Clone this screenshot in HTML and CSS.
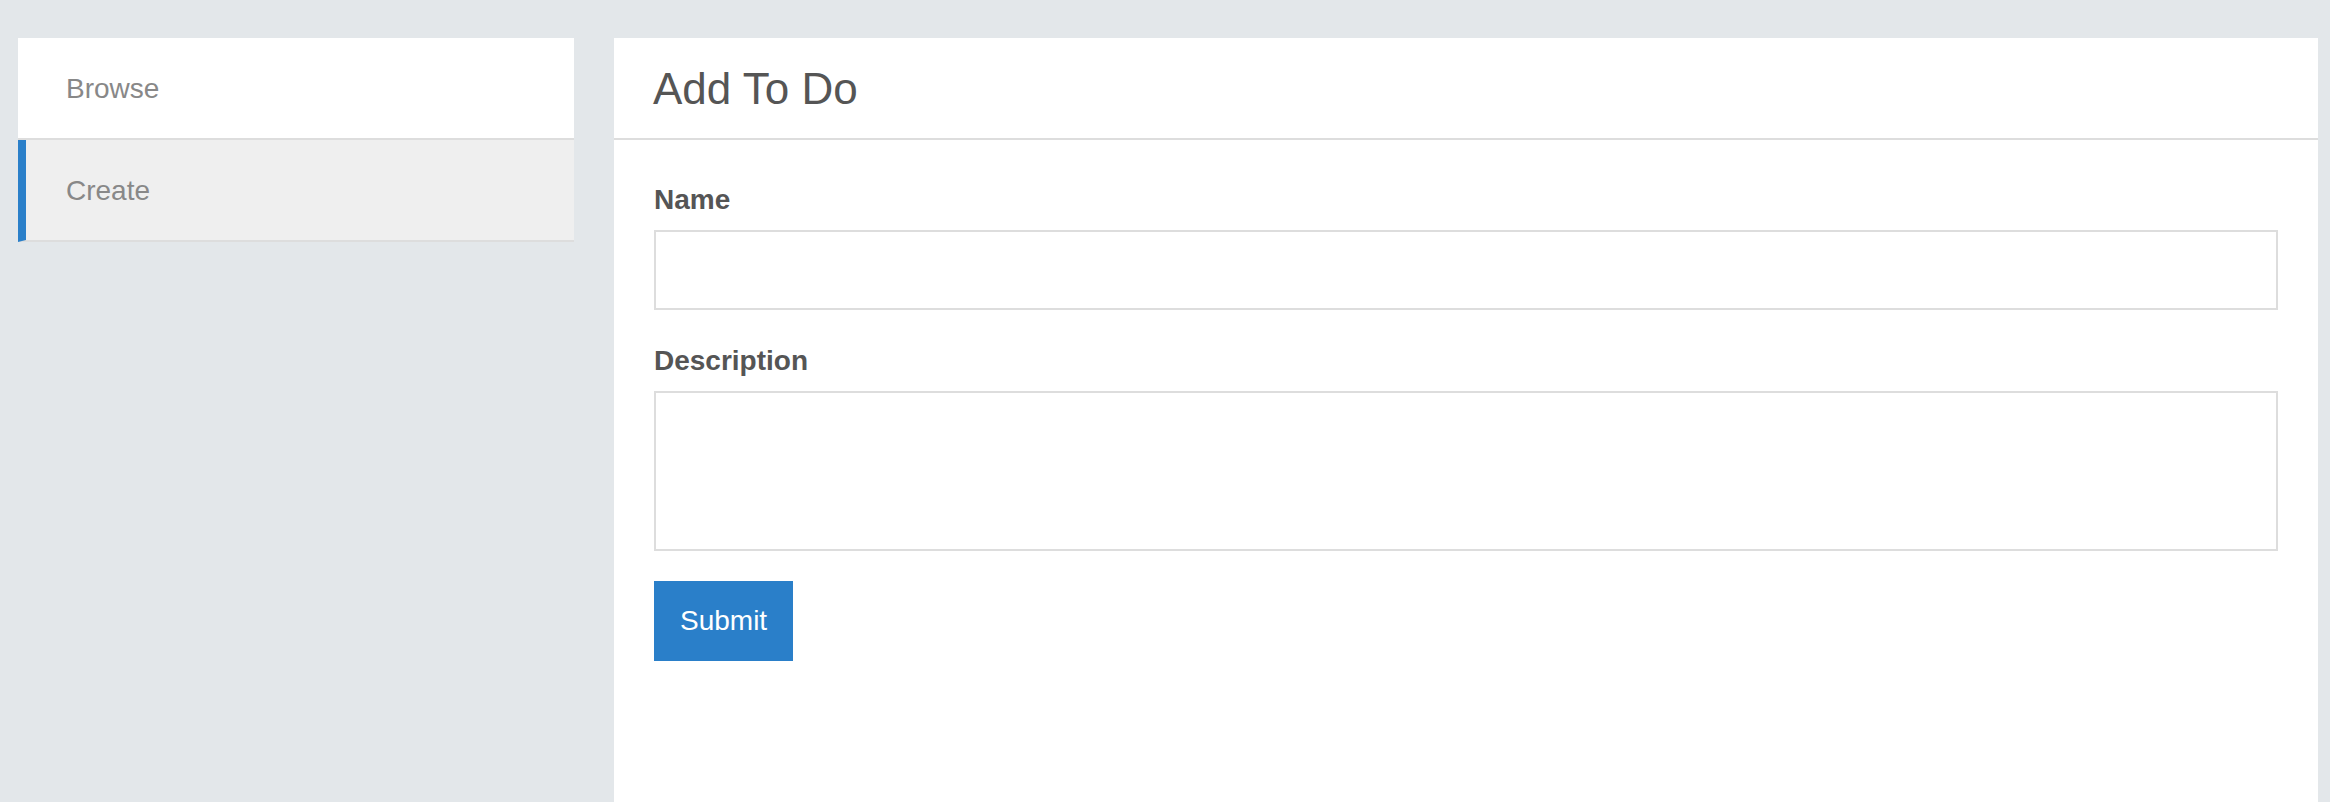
FILE: index.html
```html
<!DOCTYPE html>
<html lang="en">
<head>
<meta charset="utf-8">
<title>Add To Do</title>
<link rel="stylesheet" href="styles.css">
</head>
<body>
<div class="page">
  <nav class="sidebar">
    <a class="nav-item" href="#">Browse</a>
    <a class="nav-item active" href="#">Create</a>
  </nav>
  <main class="panel">
    <header class="panel-header">
      <h1 class="panel-title">Add To Do</h1>
    </header>
    <form class="panel-body">
      <div class="field">
        <label class="field-label" for="name">Name</label>
        <input class="field-input" id="name" type="text">
      </div>
      <div class="field">
        <label class="field-label" for="desc">Description</label>
        <textarea class="field-input field-textarea" id="desc"></textarea>
      </div>
      <button class="btn-submit" type="button">Submit</button>
    </form>
  </main>
</div>
</body>
</html>
```

FILE: styles.css
```css
html, body {
  margin: 0;
  padding: 0;
}

body {
  background: #e3e7ea;
  font-family: "Liberation Sans", Arial, Helvetica, sans-serif;
  color: #555;
}

.page {
  display: flex;
  align-items: flex-start;
  gap: 40px;
  padding: 38px 12px 0 18px;
  min-height: 100vh;
  box-sizing: border-box;
}

.sidebar {
  flex: 0 0 556px;
  display: flex;
  flex-direction: column;
}

.nav-item {
  display: flex;
  align-items: center;
  box-sizing: border-box;
  height: 102px;
  padding: 2px 0 0 48px;
  background: #fff;
  border-bottom: 2px solid #ddd;
  color: #888;
  font-size: 28px;
  text-decoration: none;
}

.nav-item.active {
  background: #efefef;
  border-left: 8px solid #2a7fc9;
  padding-left: 40px;
}

.panel {
  flex: 1;
  align-self: stretch;
  background: #fff;
  min-height: calc(100vh - 38px);
}

.panel-header {
  box-sizing: border-box;
  height: 102px;
  display: flex;
  align-items: center;
  padding: 2px 39px 0 39px;
  border-bottom: 2px solid #ddd;
}

.panel-title {
  margin: 0;
  font-size: 44px;
  font-weight: normal;
  color: #555;
}

.panel-body {
  padding: 39px 40px 40px 40px;
  margin: 0;
}

.field {
  margin-bottom: 30px;
}

.field-label {
  display: block;
  font-size: 28px;
  line-height: 42px;
  font-weight: bold;
  color: #555;
  margin-bottom: 9px;
}

.field-input {
  display: block;
  width: 100%;
  box-sizing: border-box;
  height: 80px;
  border: 2px solid #ddd;
  border-radius: 0;
  background: #fff;
  margin: 0;
  padding: 10px 16px;
  font-family: inherit;
  font-size: 28px;
  color: #555;
  outline: none;
  resize: none;
}

.field-textarea {
  height: 160px;
}

.btn-submit {
  display: block;
  height: 80px;
  padding: 0 26px;
  margin: 0;
  border: none;
  border-radius: 0;
  background: #2a7fc9;
  color: #fff;
  font-family: inherit;
  font-size: 28px;
  cursor: pointer;
}
```
